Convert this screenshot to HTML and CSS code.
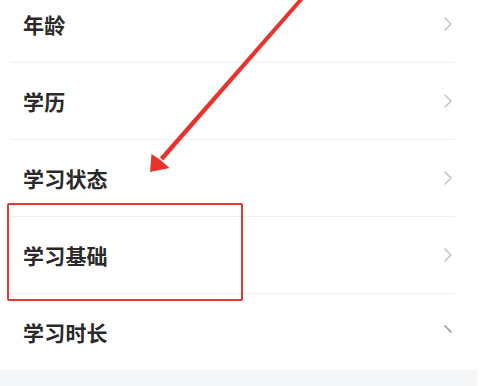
FILE: index.html
```html
<!DOCTYPE html>
<html>
<head>
    <title>学习信息</title>
    <meta name="viewport" content="width=device-width, initial-scale=1.0">
    <link rel="stylesheet" href="styles.css">
</head>
<body>
    <div class="page">
        <ul class="menu">
            <li class="menu-item">
                <span class="label">年龄</span>
                <svg class="chevron" viewBox="0 0 10 16"><path d="M2 2 L8 8 L2 14"/></svg>
            </li>
            <li class="menu-item">
                <span class="label">学历</span>
                <svg class="chevron" viewBox="0 0 10 16"><path d="M2 2 L8 8 L2 14"/></svg>
            </li>
            <li class="menu-item">
                <span class="label">学习状态</span>
                <svg class="chevron" viewBox="0 0 10 16"><path d="M2 2 L8 8 L2 14"/></svg>
            </li>
            <li class="menu-item">
                <span class="label">学习基础</span>
                <svg class="chevron" viewBox="0 0 10 16"><path d="M2 2 L8 8 L2 14"/></svg>
            </li>
            <li class="menu-item">
                <span class="label">学习时长</span>
                <svg class="chevron faded" viewBox="0 0 10 16"><path d="M2 2 L8 8"/></svg>
            </li>
        </ul>
        <div class="footer-band"></div>

        <!-- annotation overlay -->
        <div class="highlight-box"></div>
        <svg class="arrow" viewBox="0 0 500 386">
            <polygon points="303.3,-6 306.7,-4 163.2,160.5 159.8,157.5"/>
            <polygon points="150,172 151.5,154 160.5,160 169.5,168"/>
        </svg>
    </div>
</body>
</html>
```

FILE: styles.css
```css
html, body {
    margin: 0;
    padding: 0;
    background: #fff;
}
body {
    font-family: "Noto Sans CJK SC", "Noto Sans", sans-serif;
    width: 500px;
    height: 386px;
    overflow: hidden;
}
.page {
    position: relative;
    height: 386px;
    overflow: hidden;
}
.menu {
    list-style: none;
    margin: -14px 45px 0 10px;
    padding: 0;
}
.menu-item {
    height: 76px;
    border-bottom: 1px solid #efefef;
    display: flex;
    align-items: center;
    justify-content: space-between;
    padding-left: 13px;
}
.menu-item:last-child {
    border-bottom: none;
}
.label {
    font-size: 21px;
    font-weight: 700;
    color: #2a2a2a;
    letter-spacing: 0.2px;
}
.chevron {
    width: 10px;
    height: 16px;
    margin-right: 2px;
    fill: none;
    stroke: #c4c4c4;
    stroke-width: 1.6;
    stroke-linecap: round;
    stroke-linejoin: round;
}
.chevron.faded {
    stroke: #9a9a9a;
}
.footer-band {
    height: 16px;
    margin-right: 23px;
    background: #f5f6f8;
}
.highlight-box {
    position: absolute;
    left: 7px;
    top: 203px;
    width: 232px;
    height: 94px;
    border: 2px solid #e23a32;
    border-radius: 2px;
}
.arrow {
    position: absolute;
    left: 0;
    top: 0;
    width: 500px;
    height: 386px;
    fill: #e8322b;
}
```
